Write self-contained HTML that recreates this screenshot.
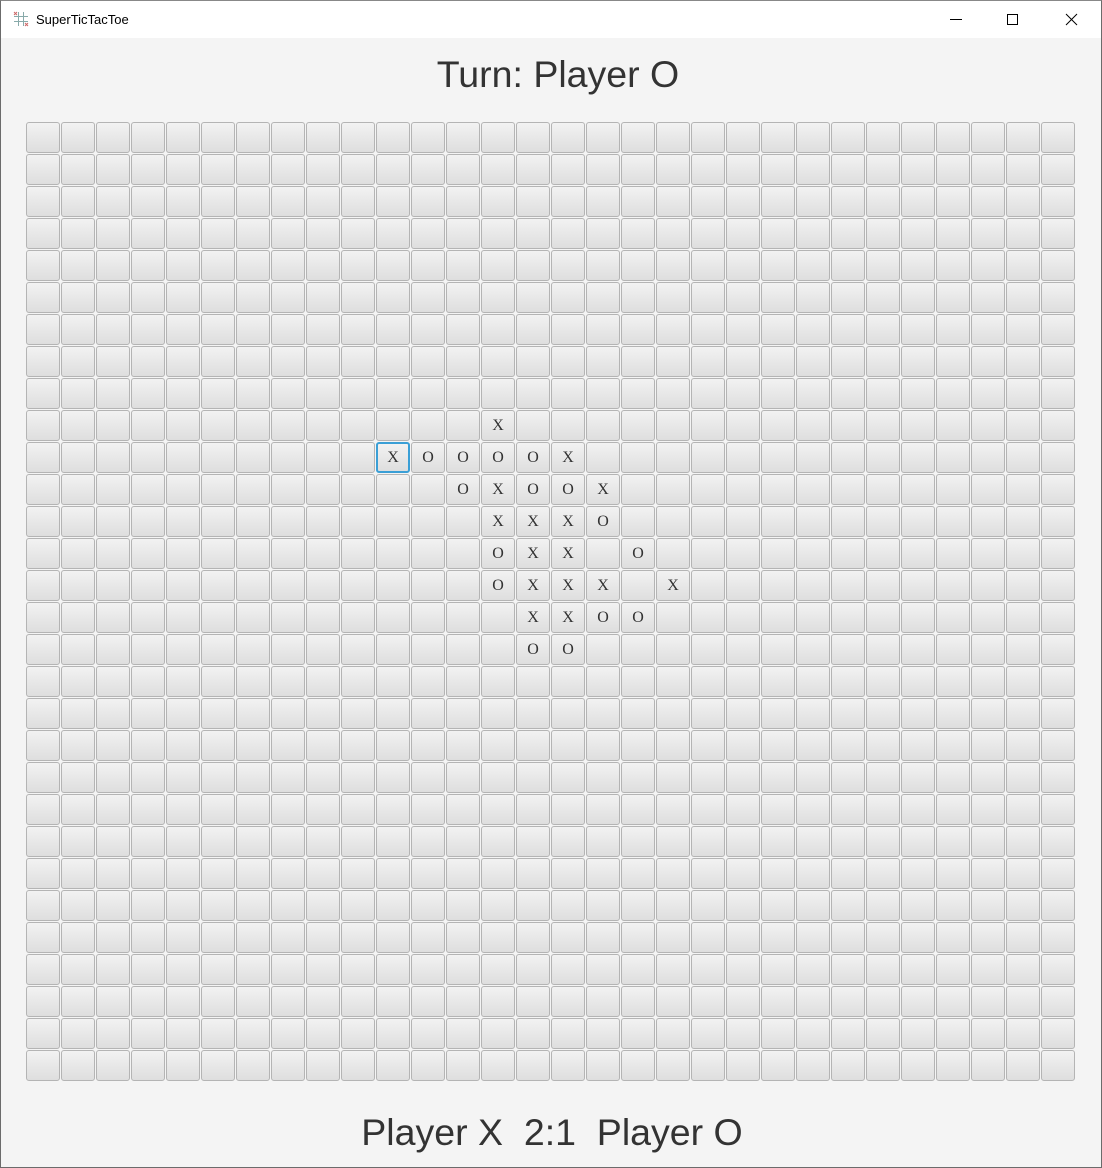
<!DOCTYPE html>
<html><head><meta charset="utf-8"><style>
*{margin:0;padding:0;box-sizing:border-box}
html,body{width:1102px;height:1168px;overflow:hidden;background:#f4f4f4;font-family:"Liberation Sans",sans-serif}
#win{position:absolute;left:0;top:0;width:1102px;height:1168px;border:1px solid #6b6b6b;border-top-color:#888}
#tb{position:absolute;left:0;top:0;width:1100px;height:37px;background:#fff}
#tb .t{position:absolute;left:35px;top:11px;font-size:13px;color:#000}
#h1{position:absolute;left:6px;width:1102px;top:52px;text-align:center;font-size:37.5px;color:#333}
#h2{position:absolute;left:0;width:1102px;top:1110px;text-align:center;font-size:37.5px;color:#333;white-space:pre}
.c{position:absolute;width:34px;height:31px;border:1px solid #b4b4b4;border-radius:3px;background:linear-gradient(#f2f2f2,#dedede);font-family:"Liberation Serif",serif;font-size:16px;color:#333;text-align:center;line-height:29px}
.s{border:2px solid #3a9fd6;line-height:27px}
</style></head><body><div id="win">
<div id="tb">
<svg style="position:absolute;left:12px;top:10px" width="16" height="16" viewBox="0 0 16 16"><g stroke="#8aa" stroke-width="1"><line x1="5.5" y1="1" x2="5.5" y2="15"/><line x1="10.5" y1="1" x2="10.5" y2="15"/><line x1="1" y1="5.5" x2="15" y2="5.5"/><line x1="1" y1="10.5" x2="15" y2="10.5"/></g><g stroke="#c66" stroke-width="1"><line x1="1" y1="1" x2="4" y2="4"/><line x1="4" y1="1" x2="1" y2="4"/><line x1="12" y1="12" x2="15" y2="15"/><line x1="15" y1="12" x2="12" y2="15"/></g></svg>
<div class="t">SuperTicTacToe</div>
<svg style="position:absolute;left:948px;top:12px" width="140" height="14"><line x1="1" y1="6.5" x2="13" y2="6.5" stroke="#000"/><rect x="58.5" y="1.5" width="10" height="10" fill="none" stroke="#000"/><path d="M117 1L128 12M128 1L117 12" stroke="#000"/></svg>
</div>
<div id="h1">Turn: Player O</div>
<div id="g"></div>
<div id="h2">Player X  2:1  Player O</div>
</div>
<script>
var m={"9,13":"X","10,10":"X","10,11":"O","10,12":"O","10,13":"O","10,14":"O","10,15":"X",
"11,12":"O","11,13":"X","11,14":"O","11,15":"O","11,16":"X",
"12,13":"X","12,14":"X","12,15":"X","12,16":"O",
"13,13":"O","13,14":"X","13,15":"X","13,17":"O",
"14,13":"O","14,14":"X","14,15":"X","14,16":"X","14,18":"X",
"15,14":"X","15,15":"X","15,16":"O","15,17":"O",
"16,14":"O","16,15":"O"};
var h="";
for(var r=0;r<30;r++)for(var c=0;c<30;c++){var k=r+","+c;
h+='<div class="c'+(k=="10,10"?" s":"")+'" style="left:'+(25+c*35)+'px;top:'+(121+r*32)+'px">'+(m[k]||"")+'</div>';}
document.getElementById("g").innerHTML=h;
</script>
</body></html>
